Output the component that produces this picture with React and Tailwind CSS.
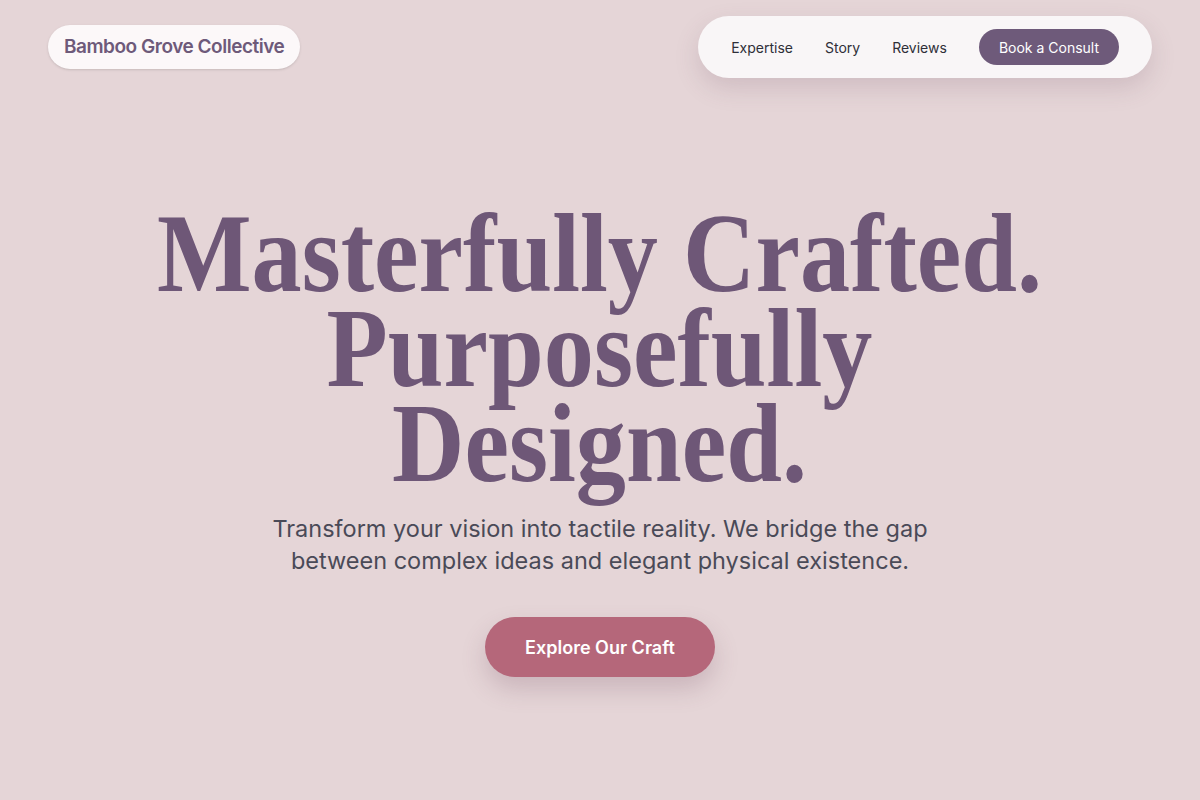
export default function App() {
  return (
    <div className="min-h-[800px] w-full bg-[#e5d5d7] relative overflow-hidden" style={{ fontFamily: "Inter, 'Noto Sans', sans-serif" }}>
      <header className="flex items-center justify-between px-12 pt-4">
        <div className="rounded-full bg-[#fcf8f9] px-4 h-11 flex items-center shadow-sm">
          <span className="text-[19px] font-semibold tracking-tight text-[#6e5a7a]">Bamboo Grove Collective</span>
        </div>
        <nav className="flex items-center gap-8 rounded-full bg-[#f9f6f7] h-[62px] px-[33px] shadow-[0_10px_25px_rgba(110,80,100,0.18)]">
          <a className="text-[14px] text-[#2f2f38]">Expertise</a>
          <a className="text-[14px] text-[#2f2f38]">Story</a>
          <a className="text-[14px] text-[#2f2f38]">Reviews</a>
          <a className="text-[14px] text-white bg-[#6e5a7a] rounded-full h-9 px-5 flex items-center">Book a Consult</a>
        </nav>
      </header>
      <main className="flex flex-col items-center text-center pt-[128px]">
        <h1 className="text-[#6e5777] font-bold text-[112px] leading-[95px] scale-x-[0.895] whitespace-nowrap" style={{ fontFamily: "'Liberation Serif', 'DejaVu Serif', serif" }}>
          Masterfully Crafted.<br />Purposefully<br />Designed.
        </h1>
        <p className="mt-[22px] text-[23.5px] leading-[32px] text-[#4a4a57] max-w-[690px]">
          Transform your vision into tactile reality. We bridge the gap between complex ideas and elegant physical existence.
        </p>
        <button className="mt-[40px] h-[60px] w-[230px] rounded-full bg-[#b5677a] text-white text-[18px] font-semibold shadow-[0_12px_24px_rgba(110,70,90,0.22)]">
          Explore Our Craft
        </button>
      </main>
    </div>
  );
}
